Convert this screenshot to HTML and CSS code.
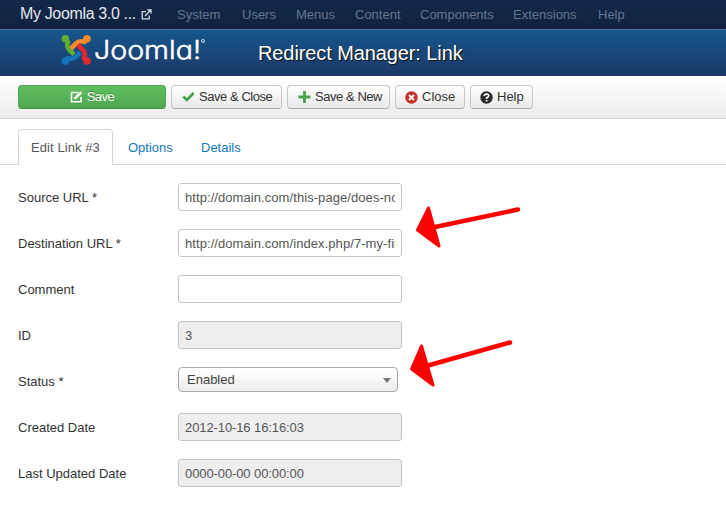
FILE: index.html
```html
<!DOCTYPE html>
<html lang="en">
<head>
<meta charset="utf-8">
<title>Redirect Manager: Link</title>
<link rel="stylesheet" href="styles.css">
</head>
<body>
<nav class="navbar">
  <a class="brand">My Joomla 3.0 ...</a>
  <svg class="ext" width="11" height="11" viewBox="0 0 11 11" fill="none" stroke="#d5dbe5" stroke-width="1.3"><path d="M5 2.6H1.2V9.8H8.2V6.5M4 7L9.5 1.3M6.3 1H10V4.6"/></svg>
  <ul class="menu">
    <li class="m1">System</li><li class="m2">Users</li><li class="m3">Menus</li><li class="m4">Content</li><li class="m5">Components</li><li class="m6">Extensions</li><li class="m7">Help</li>
  </ul>
</nav>
<header class="header">
  <svg class="logo" width="146" height="34" viewBox="0 0 146 34">
    <g fill="none" stroke-width="4.600" stroke-linejoin="round">
      <path stroke="#1474ba" d="M6 26L8 24Q13 26 16 22.500L20 18.500"/>
      <path stroke="#5fae35" d="M6 5.500L8 8Q6 12.500 9.500 16L14 20.500"/>
      <path stroke="#f58a2d" d="M26 5.500L24.500 8Q19 6 16 9.500L11 14.500"/>
      <path stroke="#e8262d" d="M26 26L24 24Q26 19 23 16L18 11"/>
    </g>
    <circle cx="5.300" cy="4.800" r="3.800" fill="#5fae35"/><circle cx="27" cy="4.800" r="3.800" fill="#f58a2d"/><circle cx="27" cy="27" r="3.800" fill="#e8262d"/><circle cx="5.300" cy="27" r="3.800" fill="#1474ba"/>
    <text class="word" x="34" y="25" textLength="107" lengthAdjust="spacingAndGlyphs">Joomla!</text>
    <circle cx="143" cy="7" r="1.500" fill="none" stroke="#fff" stroke-width=".8"/>
  </svg>
  <h1>Redirect Manager: Link</h1>
</header>
<div class="toolbar">
  <button class="btn save"><svg width="13" height="12" viewBox="0 0 13 12" fill="none" stroke="#fff" stroke-width="1.600"><path d="M8 1.500H1.500V10.700H11V6"/><path stroke-width="2.600" d="M4.500 7.700L11.300 1.200"/></svg><span>Save</span></button>
  <button class="btn b2"><svg width="13" height="12" viewBox="0 0 13 12" fill="none" stroke="#41a047" stroke-width="2.600"><path d="M1.300 5.500L4.800 9L11.700 2"/></svg><span class="t2">Save &amp; Close</span></button>
  <button class="btn b3"><svg width="13" height="12" viewBox="0 0 13 12" fill="none" stroke="#46a546" stroke-width="2.800"><path d="M6.500 0V12M.500 6H12.500"/></svg><span class="t3">Save &amp; New</span></button>
  <button class="btn b4"><svg width="13" height="13" viewBox="0 0 13 13"><circle cx="6.500" cy="6.500" r="6.200" fill="#c9302c"/><path d="M4 4L9 9M9 4L4 9" stroke="#fff" stroke-width="2"/></svg><span>Close</span></button>
  <button class="btn b5"><svg width="13" height="13" viewBox="0 0 13 13"><circle cx="6.500" cy="6.500" r="6.200" fill="#2b2b2b"/><path d="M4.200 5Q4.400 3 6.600 3Q8.800 3.100 8.700 4.900Q8.500 6 6.600 6.800V8M6.600 8.900V10.600" fill="none" stroke="#fff" stroke-width="1.700"/></svg><span>Help</span></button>
</div>
<ul class="tabs"><li class="active">Edit Link #3</li><li class="o">Options</li><li class="d">Details</li></ul>
<form class="form">
  <div class="row"><label>Source URL *</label><div class="input"><span class="v1">http://domain.com/this-page/does-not</span></div></div>
  <div class="row"><label>Destination URL *</label><div class="input"><span class="v2">http://domain.com/index.php/7-my-fir</span></div></div>
  <div class="row"><label>Comment</label><div class="input"></div></div>
  <div class="row"><label>ID</label><div class="input ro">3</div></div>
  <div class="row"><label>Status *</label><div class="select"><span>Enabled</span><i></i></div></div>
  <div class="row"><label>Created Date</label><div class="input ro"><span class="v6">2012-10-16 16:16:03</span></div></div>
  <div class="row"><label>Last Updated Date</label><div class="input ro"><span class="v7">0000-00-00 00:00:00</span></div></div>
</form>
<svg class="arrows" width="120" height="200" viewBox="405 200 120 200" fill="#f00" stroke="#f00" stroke-linejoin="round" stroke-linecap="round">
  <path stroke-width="4.500" d="M435 227L518 209.500M428 365.500L510 342.500"/>
  <path stroke-width="3" d="M428.500 208L417.500 230L439 246ZM421.500 346L411.500 369L433 385Z"/>
</svg>
</body>
</html>
```

FILE: styles.css
```css
* { box-sizing: border-box; }
body { margin: 0; background: #fff; color: #333; font: 13px/18px "Liberation Sans", Arial, sans-serif; width: 726px; height: 519px; overflow: hidden; }
ul { list-style: none; margin: 0; padding: 0; }
.navbar { height: 29px; display: flex; background: linear-gradient(#13294a, #10223e); padding-left: 20px; }
.brand { font-size: 16px; line-height: 27px; letter-spacing: -.35px; color: #e4e8ef; width: 121px; white-space: nowrap; }
.ext { margin-top: 9px; }
.menu { display: flex; margin-left: 25px; color: #65758f; line-height: 29px; }
.m1 { width: 65px; } .m2 { width: 54px; } .m3 { width: 59px; } .m4 { width: 65px; } .m5 { width: 93px; } .m6 { width: 85px; }
.header { height: 47px; display: flex; background: linear-gradient(#17568c, #1a3867); border-top: 1px solid #52739f; padding-left: 60px; }
.logo { margin-top: 4px; flex: none; }
.word { font: 300 25px Inter, sans-serif; font-feature-settings: "cv11"; fill: #fff; stroke: #fff; stroke-width: .5px; }
h1 { margin: 0 0 0 52px; font-size: 20px; font-weight: 400; line-height: 46px; letter-spacing: -.1px; color: #fff; text-shadow: 1px 1px 1px #111; white-space: nowrap; }
.toolbar { height: 43px; display: flex; align-items: flex-start; gap: 5px; padding: 9px 0 0 18px; background: linear-gradient(#fff, #ededed); border-bottom: 1px solid #d3d3d3; }
.btn { height: 24px; display: flex; align-items: center; gap: 4px; padding: 0 0 0 10px; font: 13px/22px "Liberation Sans", Arial, sans-serif; color: #333; background: linear-gradient(#fff, #e9e9e9); border: 1px solid #c8c8c8; border-bottom-color: #aaa; border-radius: 4px; white-space: nowrap; }
.save { width: 148px; padding: 0; justify-content: center; letter-spacing: -.5px; color: #fff; background: linear-gradient(#5fbf5f, #4fa64f); border-color: #50a450 #50a450 #3d8b3d; text-shadow: 0 -1px 0 rgba(0,0,0,.25); }
.b2 { width: 111px; } .b3 { width: 103px; } .b4 { width: 70px; padding-left: 9px; } .b5 { width: 63px; padding-left: 9px; }
.t2, .t3 { letter-spacing: -.45px; }
.tabs { display: flex; margin-top: 10px; height: 36px; padding-left: 18px; border-bottom: 1px solid #d8d8d8; line-height: 37px; color: #1478b8; }
.active { width: 95px; height: 36px; padding-left: 12px; line-height: 36px; letter-spacing: .08px; color: #555; background: #fff; border: 1px solid #d8d8d8; border-bottom: 0; border-radius: 4px 4px 0 0; }
.o { margin-left: 15px; width: 73px; }
.form { padding: 18px 0 0 18px; }
.row { display: flex; height: 46px; }
label { width: 160px; line-height: 29px; }
.input { width: 224px; height: 28px; border: 1px solid #c6c6c6; border-radius: 3px; padding: 0 6px; line-height: 27px; color: #555; white-space: nowrap; background: #fff; }
.input span { display: block; overflow: hidden; }
.v1, .v2 { letter-spacing: .07px; }
.v6, .v7 { letter-spacing: -.1px; }
.ro { background: #eee; }
.select { width: 220px; height: 25px; display: flex; align-items: center; justify-content: space-between; padding: 1px 6px 0 8px; border: 1px solid #aaa; border-radius: 4px; background: linear-gradient(#fff 20%, #f4f4f4 60%, #eee); color: #444; line-height: 24px; }
.select i { border: 4.5px solid transparent; border-top: 5px solid #777; border-bottom: 0; }
.arrows { position: absolute; left: 405px; top: 200px; }
```
